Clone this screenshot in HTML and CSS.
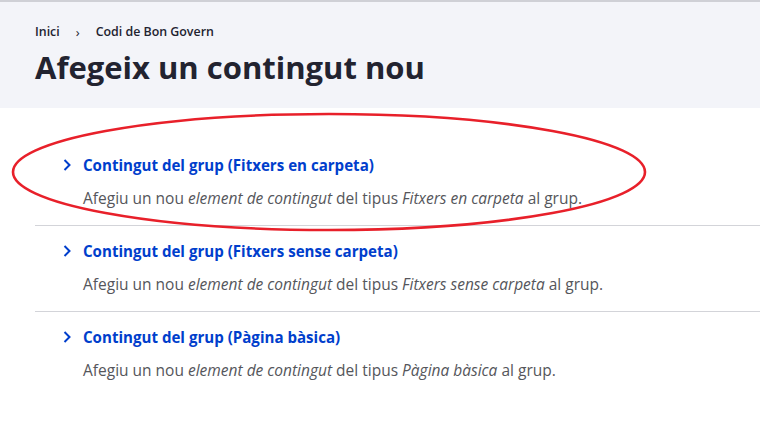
FILE: index.html
```html
<!DOCTYPE html>
<html lang="ca">
<head>
<meta charset="utf-8">
<title>Afegeix un contingut nou</title>
<link rel="stylesheet" href="styles.css">
</head>
<body>
<div class="page">
  <header class="page-header">
    <nav class="breadcrumb">
      <a class="crumb" href="#">Inici</a>
      <span class="sep">›</span>
      <a class="crumb" href="#">Codi de Bon Govern</a>
    </nav>
    <h1 class="title">Afegeix un contingut nou</h1>
  </header>
  <ul class="admin-list">
    <li class="item">
      <a class="item-link" href="#">
        <svg class="chev" viewBox="0 0 8 12" width="8" height="12"><path d="M1.5 1 L6.5 6 L1.5 11" fill="none" stroke="currentColor" stroke-width="2"/></svg>
        <span>Contingut del grup (Fitxers en carpeta)</span>
      </a>
      <p class="desc">Afegiu un nou <em>element de contingut</em> del tipus <em>Fitxers en carpeta</em> al grup.</p>
    </li>
    <li class="item">
      <a class="item-link" href="#">
        <svg class="chev" viewBox="0 0 8 12" width="8" height="12"><path d="M1.5 1 L6.5 6 L1.5 11" fill="none" stroke="currentColor" stroke-width="2"/></svg>
        <span>Contingut del grup (Fitxers sense carpeta)</span>
      </a>
      <p class="desc">Afegiu un nou <em>element de contingut</em> del tipus <em>Fitxers sense carpeta</em> al grup.</p>
    </li>
    <li class="item">
      <a class="item-link" href="#">
        <svg class="chev" viewBox="0 0 8 12" width="8" height="12"><path d="M1.5 1 L6.5 6 L1.5 11" fill="none" stroke="currentColor" stroke-width="2"/></svg>
        <span>Contingut del grup (Pàgina bàsica)</span>
      </a>
      <p class="desc">Afegiu un nou <em>element de contingut</em> del tipus <em>Pàgina bàsica</em> al grup.</p>
    </li>
  </ul>
  <svg class="annotation" width="760" height="421" viewBox="0 0 760 421">
    <ellipse cx="329" cy="172" rx="316" ry="58" fill="none" stroke="#e8202a" stroke-width="2.6"/>
  </svg>
</div>
</body>
</html>
```

FILE: styles.css
```css
* { box-sizing: border-box; }
html, body { margin: 0; padding: 0; background: #fff; }
body {
  font-family: "Open Sans", "Noto Sans", "Liberation Sans", sans-serif;
  color: #222330;
  width: 760px;
  height: 421px;
  overflow: hidden;
}
.page { position: relative; height: 421px; }
.page-header {
  background: #f3f4f9;
  border-top: 2px solid #cfd0d6;
  height: 108px;
  padding: 22px 35px 0;
}
.breadcrumb {
  display: flex;
  align-items: center;
  font-size: 12.4px;
  font-weight: 600;
  line-height: 16px;
  height: 16px;
}
.crumb { color: #222330; text-decoration: none; }
.sep { margin: 0 16px 0 16px; font-weight: 400; font-size: 13px; }
.title {
  margin: 7px 0 0;
  font-size: 31px;
  font-weight: 700;
  line-height: 40px;
  letter-spacing: 0;
  color: #222330;
}
.admin-list {
  list-style: none;
  margin: 32px 0 0 35px;
  padding: 0;
}
.item {
  padding: 15px 0 17px 28px;
  border-bottom: 1px solid #d3d4d9;
}
.item:last-child { border-bottom: none; }
.item-link {
  display: flex;
  align-items: center;
  gap: 12px;
  color: #003ecc;
  text-decoration: none;
  font-size: 15.1px;
  font-weight: 700;
  line-height: 20px;
}
.chev { flex: none; }
.desc {
  margin: 13px 0 0 20px;
  font-size: 15.5px;
  line-height: 20px;
  color: #55565b;
}
.desc em { font-style: italic; }
.annotation {
  position: absolute;
  left: 0;
  top: 0;
  pointer-events: none;
}
```
